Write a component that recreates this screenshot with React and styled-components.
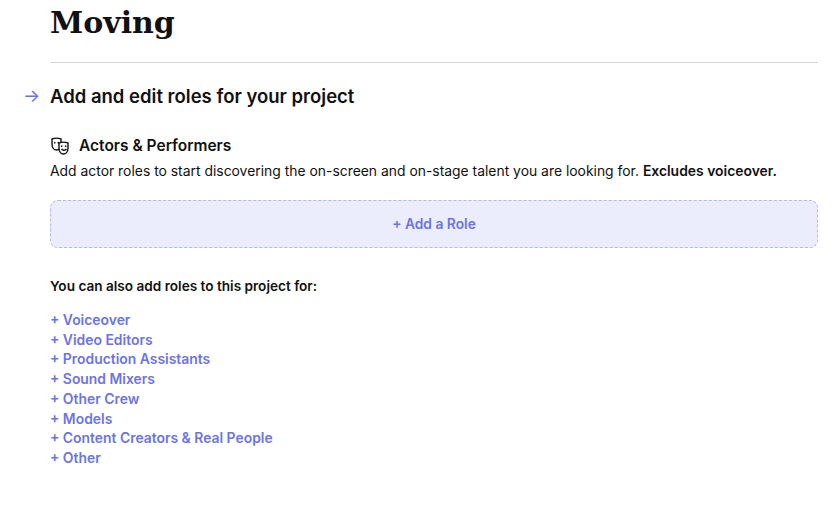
import React from "react";
import styled, { createGlobalStyle } from "styled-components";

const Global = createGlobalStyle`
  body { margin: 0; background: #fff; font-family: Inter, "Noto Sans", sans-serif; color: #111; }
`;

const Page = styled.div`
  padding: 0 22px 0 50px;
`;

const Title = styled.h1`
  font-family: "DejaVu Serif", "Liberation Serif", serif;
  font-weight: 700;
  font-size: 30px;
  margin: 0;
  padding-top: 5px;
  height: 57px;
  line-height: 36px;
  border-bottom: 1px solid #d6d6d9;
`;

const StepRow = styled.div`
  position: relative;
  margin-top: 21px;
  display: flex;
  align-items: center;
`;

const Arrow = styled.span`
  position: absolute;
  left: -27px;
  color: #6b73e8;
  font-size: 18px;
  line-height: 1;
`;

const StepTitle = styled.h2`
  margin: 0;
  font-size: 18.5px;
  font-weight: 600;
  line-height: 24px;
`;

const SectionHead = styled.div`
  margin-top: 28px;
  display: flex;
  align-items: center;
  gap: 7px;
  font-size: 15.5px;
  font-weight: 600;
  line-height: 20px;
`;

const Desc = styled.p`
  margin: 6px 0 0;
  font-size: 13.9px;
  line-height: 18px;
  b { font-weight: 600; }
`;

const AddBox = styled.div`
  margin-top: 20px;
  height: 46px;
  border: 1px dashed #b3b7f2;
  border-radius: 8px;
  background: #ecedfc;
  display: flex;
  align-items: center;
  justify-content: center;
  color: #6b73e8;
  font-size: 13.8px;
  font-weight: 600;
`;

const AlsoLabel = styled.div`
  margin-top: 29px;
  font-size: 13.6px;
  font-weight: 600;
  line-height: 18px;
`;

const LinkList = styled.div`
  margin-top: 16px;
  display: flex;
  flex-direction: column;
`;

const RoleLink = styled.a`
  color: #6b73e8;
  font-size: 13.9px;
  font-weight: 600;
  line-height: 19.7px;
`;

const Masks = () => (
  <svg width="22" height="18" viewBox="0 0 22 18" fill="none" stroke="#111" strokeWidth="1.4">
    <path d="M2 2c3-1.2 6-1.2 9 0v5c0 3.5-2 6-4.5 6S2 10.5 2 7z" />
    <path d="M9 6c3-1.2 6-1.2 9 0v5c0 3.5-2 6-4.5 6S9 14.5 9 11z" fill="#fff" />
    <path d="M11 9.5l1.4-.6M15 8.9l1.4.6M11.5 12c1.2 1.6 3.8 1.6 5 0" />
    <path d="M4 5.5l1.4.6M7.6 6.1L9 5.5" />
  </svg>
);

const roles = [
  "Voiceover", "Video Editors", "Production Assistants", "Sound Mixers",
  "Other Crew", "Models", "Content Creators & Real People", "Other",
];

export default function App() {
  return (
    <Page>
      <Global />
      <Title>Moving</Title>
      <StepRow>
        <Arrow>→</Arrow>
        <StepTitle>Add and edit roles for your project</StepTitle>
      </StepRow>
      <SectionHead><Masks />Actors &amp; Performers</SectionHead>
      <Desc>
        Add actor roles to start discovering the on-screen and on-stage talent you are looking for. <b>Excludes voiceover.</b>
      </Desc>
      <AddBox>+ Add a Role</AddBox>
      <AlsoLabel>You can also add roles to this project for:</AlsoLabel>
      <LinkList>
        {roles.map((r) => <RoleLink key={r}>+ {r}</RoleLink>)}
      </LinkList>
    </Page>
  );
}
